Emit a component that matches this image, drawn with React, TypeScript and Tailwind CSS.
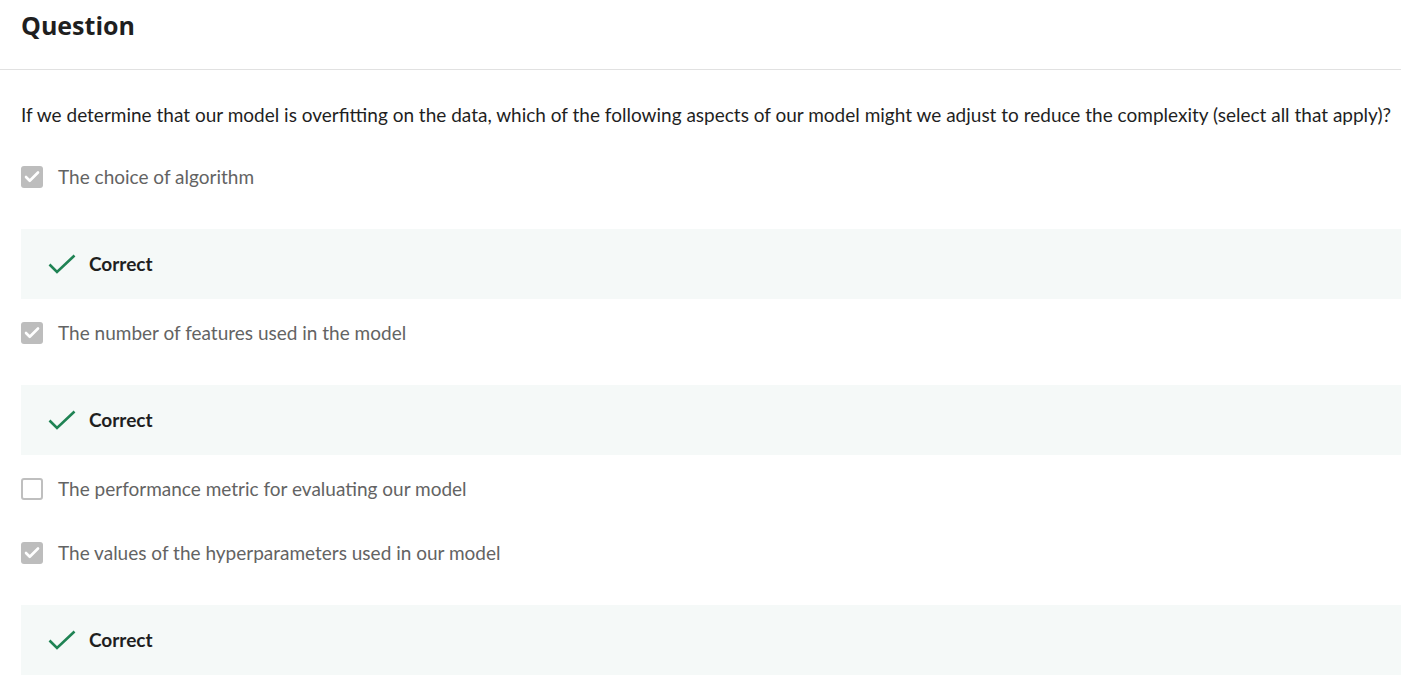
import { Check } from 'lucide-react'

interface Option {
  label: string
  checked: boolean
  correct?: boolean
}

const options: Option[] = [
  { label: 'The choice of algorithm', checked: true, correct: true },
  { label: 'The number of features used in the model', checked: true, correct: true },
  { label: 'The performance metric for evaluating our model', checked: false },
  { label: 'The values of the hyperparameters used in our model', checked: true, correct: true },
]

function Box({ checked }: { checked: boolean }) {
  if (checked) {
    return (
      <div className="w-[22px] h-[22px] rounded-[3px] bg-[#bdbdbd] flex items-center justify-center shrink-0">
        <Check size={18} strokeWidth={3.5} className="text-white" />
      </div>
    )
  }
  return <div className="w-[22px] h-[22px] rounded-[3px] border-2 border-[#bfbfbf] bg-white shrink-0" />
}

function CorrectCheck() {
  return (
    <svg width="28" height="20" viewBox="0 0 28 20" className="shrink-0">
      <path d="M1.5 10.5 L9 18 L26.5 1.5" fill="none" stroke="#1f8354" strokeWidth="2.6" />
    </svg>
  )
}

export default function App() {
  return (
    <div className="bg-white min-h-screen" style={{ fontFamily: 'Lato, sans-serif' }}>
      <div className="h-[70px] px-[21px] pt-[8px] border-b border-[#e1e1e1]">
        <h1
          className="text-[25px] leading-[34px] font-bold text-[#1f1f1f]"
          style={{ fontFamily: '"Open Sans", sans-serif' }}
        >
          Question
        </h1>
      </div>

      <div className="pl-[21px] pt-[33px]">
        <p className="text-[19px] leading-[24px] text-[#1f1f1f] whitespace-nowrap">
          If we determine that our model is overfitting on the data, which of the following aspects of our model might we adjust to reduce the complexity (select all that apply)?
        </p>

        <div className="mt-[38px]">
          {options.map(opt => (
            <div key={opt.label}>
              <div className="flex items-center gap-[15px] h-[24px] mb-[40px]">
                <Box checked={opt.checked} />
                <span className="text-[19px] leading-[24px] text-[#636363]">{opt.label}</span>
              </div>
              {opt.correct && (
                <div className="h-[70px] bg-[#f5f9f8] flex items-center gap-[13px] pl-[27px] mb-[22px]">
                  <CorrectCheck />
                  <span className="text-[19px] leading-[24px] font-bold text-[#1f1f1f]">Correct</span>
                </div>
              )}
            </div>
          ))}
        </div>
      </div>
    </div>
  )
}
